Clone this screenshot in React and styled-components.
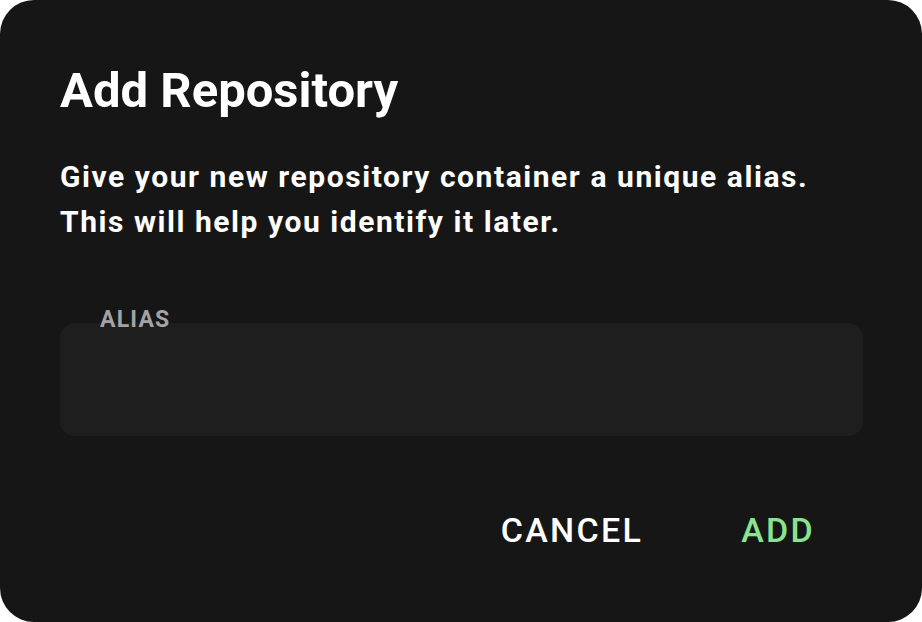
import React from "react";
import styled, { createGlobalStyle } from "styled-components";

const Global = createGlobalStyle`
  html, body { margin: 0; padding: 0; background: #ffffff; }
  body { font-family: Roboto, "Noto Sans", "Liberation Sans", sans-serif; }
  * { box-sizing: border-box; }
`;

const Dialog = styled.div`
  width: 922px;
  height: 622px;
  background: #161616;
  border-radius: 34px;
  padding: 61px 59px 0 60px;
  display: flex;
  flex-direction: column;
`;

const Title = styled.h1`
  margin: 0;
  font-size: 49px;
  line-height: 60px;
  font-weight: 700;
  color: #ffffff;
`;

const Description = styled.p`
  margin: 34px 0 0;
  font-size: 30px;
  line-height: 44.5px;
  font-weight: 700;
  letter-spacing: 1.55px;
  color: #ffffff;
`;

const Field = styled.div`
  margin-top: 64px;
  display: flex;
  flex-direction: column;
`;

const Label = styled.label`
  margin-left: 40px;
  font-size: 23px;
  line-height: 24px;
  font-weight: 700;
  letter-spacing: 1.2px;
  color: #a3a3a3;
  margin-bottom: -9.5px;
  position: relative;
`;

const Input = styled.input`
  height: 113px;
  width: 100%;
  background: #1e1e1e;
  border: none;
  border-radius: 15px;
  outline: none;
  color: #ffffff;
  font-family: inherit;
  font-size: 26px;
  padding: 0 40px;
`;

const Actions = styled.div`
  margin-top: 74px;
  display: flex;
  justify-content: flex-end;
  gap: 98px;
  padding-right: 48px;
`;

const Button = styled.button`
  background: none;
  border: none;
  padding: 0;
  font-family: inherit;
  font-size: 34px;
  line-height: 40px;
  font-weight: 500;
  letter-spacing: 2.3px;
  color: ${(p) => (p.$primary ? "#8ae38e" : "#ffffff")};
  cursor: pointer;
`;

export default function App() {
  return (
    <>
      <Global />
      <Dialog>
        <Title>Add Repository</Title>
        <Description>
          Give your new repository container a unique alias.
          <br />
          This will help you identify it later.
        </Description>
        <Field>
          <Label>ALIAS</Label>
          <Input aria-label="Alias" />
        </Field>
        <Actions>
          <Button>CANCEL</Button>
          <Button $primary>ADD</Button>
        </Actions>
      </Dialog>
    </>
  );
}
